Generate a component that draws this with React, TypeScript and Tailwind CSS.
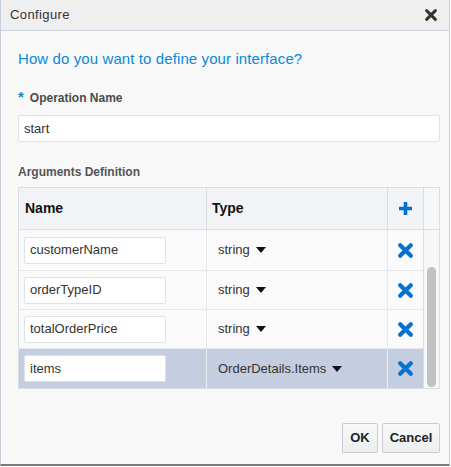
const rows = [
  { name: "customerName", type: "string", h: "h-[41px]" },
  { name: "orderTypeID", type: "string", h: "h-[39px]" },
  { name: "totalOrderPrice", type: "string", h: "h-[39px]" },
  { name: "items", type: "OrderDetails.Items", h: "h-[39px]", selected: true },
]

function Caret() {
  return (
    <svg width="10" height="6" viewBox="0 0 10 6" className="ml-[6px]">
      <path d="M0 0h10L5 6z" fill="#111" />
    </svg>
  )
}

function Cross({ size, color, w }: { size: number; color: string; w: number }) {
  return (
    <svg width={size} height={size} viewBox="0 0 16 16">
      <path d="M3 3L13 13M13 3L3 13" stroke={color} strokeWidth={w} strokeLinecap="round" />
    </svg>
  )
}

function PlusIcon() {
  return (
    <svg width="15" height="15" viewBox="0 0 15 15">
      <path d="M7.5 1v13M1 7.5h13" stroke="#0572ce" strokeWidth="3.6" />
    </svg>
  )
}

export default function App() {
  return (
    <div className="w-[451px] h-[467px] bg-white font-['Liberation_Sans',Arial,sans-serif]">
      <div className="w-[450px] h-[466px] flex flex-col border-l border-r border-[#c7cfd9] border-b-2 border-b-[#7a7a7a] bg-[#f8f8f8]">
        <div className="h-[31px] shrink-0 flex items-center justify-between pl-[9px] pr-[11px] bg-[#efefef] border-b border-[#c9d1db]">
          <span className="text-[13px] tracking-[0.4px] text-[#333]">Configure</span>
          <Cross size={14} color="#333" w={3.4} />
        </div>

        <div className="flex-1 flex flex-col pl-[17px] pr-[9px]">
          <h1 className="mt-[18px] text-[15px] leading-[20px] tracking-[0.1px] text-[#0b8ad6]">
            How do you want to define your interface?
          </h1>

          <div className="mt-[20px] flex items-baseline gap-[6px] text-[12px] font-bold text-[#4a4a4a]">
            <span className="text-[#0b8ad6] text-[15px] leading-[12px]">*</span>
            <span>Operation Name</span>
          </div>
          <div className="mt-[8px] h-[27px] w-[422px] bg-white border border-[#dfe2e6] rounded-[2px] flex items-center px-[5px] text-[13px] text-[#333]">
            start
          </div>

          <div className="mt-[21px] text-[12px] font-bold text-[#555]">Arguments Definition</div>

          <div className="mt-[6px] w-[422px] border border-[#d9dee5] flex">
            <div className="flex-1 flex flex-col">
              <div className="h-[42px] flex bg-[#f1f3f6] border-b border-[#d9dee5] text-[14px] font-bold text-[#111]">
                <div className="w-[188px] border-r border-[#d9dee5] flex items-center pl-[6px]">Name</div>
                <div className="w-[181px] border-r border-[#d9dee5] flex items-center pl-[5px]">Type</div>
                <div className="flex-1 flex items-center justify-center">
                  <PlusIcon />
                </div>
              </div>
              {rows.map((r, i) => (
                <div
                  key={i}
                  className={`${r.h} flex text-[13px] text-[#333] ${i < rows.length - 1 ? "border-b border-[#e6e8eb]" : ""} ${r.selected ? "bg-[#c5cde0]" : "bg-[#fafafa]"}`}
                >
                  <div className={`w-[188px] border-r ${r.selected ? "border-[#e8ecf3]" : "border-[#e6e8eb]"} flex items-center pl-[5px]`}>
                    <div className="w-[142px] h-[27px] bg-white border border-[#dfe2e6] rounded-[2px] flex items-center px-[5px]">
                      {r.name}
                    </div>
                  </div>
                  <div className={`w-[181px] border-r ${r.selected ? "border-[#e8ecf3]" : "border-[#e6e8eb]"} flex items-center pl-[11px]`}>
                    <span>{r.type}</span>
                    <Caret />
                  </div>
                  <div className="flex-1 flex items-center justify-center">
                    <Cross size={17} color="#0572ce" w={4} />
                  </div>
                </div>
              ))}
            </div>
            <div className="w-[16px] flex flex-col border-l border-[#d9dee5]">
              <div className="h-[42px] bg-[#f6f7f9] border-b border-[#d9dee5]" />
              <div className="flex-1 bg-[#f7f7f7] flex flex-col items-center justify-end pb-[1px]">
                <div className="w-[9px] h-[120px] rounded-full bg-[#c1c1c1]" />
              </div>
            </div>
          </div>

          <div className="mt-auto mb-[11px] flex justify-end gap-[4px]">
            <button className="h-[30px] w-[36px] border border-[#c9ccd0] rounded-[2px] bg-gradient-to-b from-[#f8f8f8] to-[#eceeef] text-[13px] font-bold text-[#222]">
              OK
            </button>
            <button className="h-[30px] w-[58px] border border-[#c9ccd0] rounded-[2px] bg-gradient-to-b from-[#f8f8f8] to-[#eceeef] text-[13px] font-bold text-[#222]">
              Cancel
            </button>
          </div>
        </div>
      </div>
    </div>
  )
}
